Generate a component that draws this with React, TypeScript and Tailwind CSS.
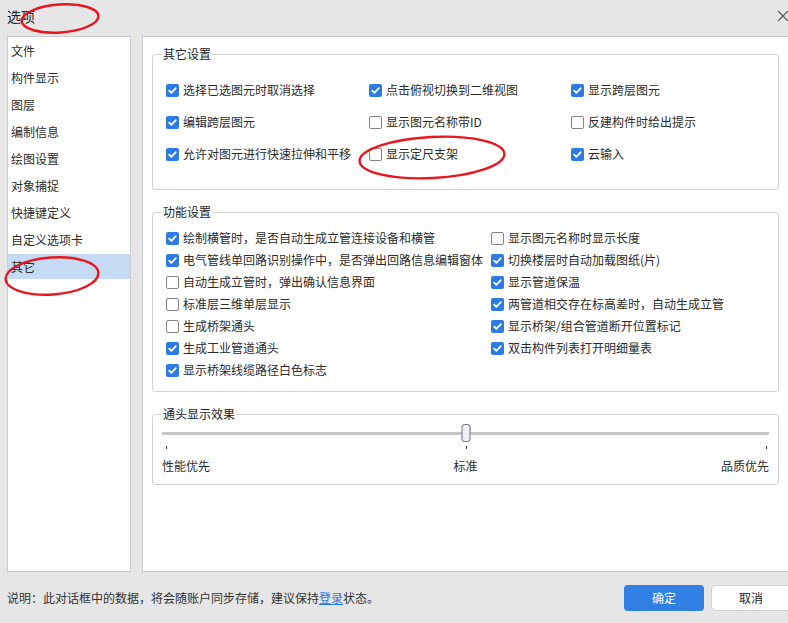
import React from 'react';

type Item = [string, boolean];

const otherSettings: Item[] = [
  ['选择已选图元时取消选择', true],
  ['点击俯视切换到二维视图', true],
  ['显示跨层图元', true],
  ['编辑跨层图元', true],
  ['显示图元名称带ID', false],
  ['反建构件时给出提示', false],
  ['允许对图元进行快速拉伸和平移', true],
  ['显示定尺支架', false],
  ['云输入', true],
];

const funcLeft: Item[] = [
  ['绘制横管时，是否自动生成立管连接设备和横管', true],
  ['电气管线单回路识别操作中，是否弹出回路信息编辑窗体', true],
  ['自动生成立管时，弹出确认信息界面', false],
  ['标准层三维单层显示', false],
  ['生成桥架通头', false],
  ['生成工业管道通头', true],
  ['显示桥架线缆路径白色标志', true],
];

const funcRight: Item[] = [
  ['显示图元名称时显示长度', false],
  ['切换楼层时自动加载图纸(片)', true],
  ['显示管道保温', true],
  ['两管道相交存在标高差时，自动生成立管', true],
  ['显示桥架/组合管道断开位置标记', true],
  ['双击构件列表打开明细量表', true],
];

const navItems = ['文件', '构件显示', '图层', '编制信息', '绘图设置', '对象捕捉', '快捷键定义', '自定义选项卡', '其它'];

const Check = ({ checked }: { checked: boolean }) =>
  checked ? (
    <span className="flex h-[13px] w-[13px] shrink-0 items-center justify-center rounded-[2px] bg-[#2b7be2]">
      <svg width="11" height="11" viewBox="0 0 11 11" fill="none">
        <path d="M2.2 5.6 L4.4 7.8 L8.8 3.1" stroke="white" strokeWidth="1.8" strokeLinecap="round" strokeLinejoin="round" />
      </svg>
    </span>
  ) : (
    <span className="h-[13px] w-[13px] shrink-0 rounded-[2px] border border-[#858585] bg-white" />
  );

const CheckRow = ({ label, checked, h }: { label: string; checked: boolean; h: string }) => (
  <div className={`flex items-center gap-[4px] whitespace-nowrap ${h}`}>
    <Check checked={checked} />
    <span>{label}</span>
  </div>
);

// groupbox: border + caption sitting on the top edge
const Group = ({ title, children, className }: { title: string; children: React.ReactNode; className?: string }) => (
  <fieldset className={`rounded-[3px] border border-[#d2d2d2] ${className ?? ''}`}>
    <legend className="ml-[9px] px-px leading-[16px] text-[#222]">{title}</legend>
    {children}
  </fieldset>
);

export default function App() {
  return (
    <div className="relative h-[623px] w-[788px] overflow-hidden bg-[#e6e6e6] font-['Noto_Sans_CJK_SC','Noto_Sans',sans-serif] text-[12px] text-[#2b2b2b]">
      <div className="w-[800px]">
        {/* title bar */}
        <div className="flex h-[32px] items-center justify-between pl-[7px] pr-[10px]">
          <span className="text-[14px] leading-[18px] text-[#1f1f1f]">选项</span>
          <svg width="12" height="12" viewBox="0 0 12 12" className="mr-[1px]">
            <path d="M1 1 L11 11 M11 1 L1 11" stroke="#555" strokeWidth="1.1" />
          </svg>
        </div>

        <div className="mt-[4px] flex h-[536px] gap-[11px] pl-[7px]">
          {/* sidebar */}
          <div className="w-[124px] border border-[#c9ccd1] bg-white">
            {navItems.map((n) => (
              <div key={n} className="flex h-[27px] items-center">
                <div className={`flex h-[25px] w-full items-center pl-[3px] ${n === '其它' ? 'bg-[#c4dbf3]' : ''}`}>{n}</div>
              </div>
            ))}
          </div>

          {/* content */}
          <div className="w-[651px] border border-[#c9ccd1] bg-white px-[9px] pt-[9px]">
            <div className="w-[627px]">
              <Group title="其它设置">
                <div className="grid grid-cols-[203px_202px_1fr] pb-[19px] pl-[13px] pt-[12px]">
                  {otherSettings.map(([l, c]) => (
                    <CheckRow key={l} label={l} checked={c} h="h-[32px]" />
                  ))}
                </div>
              </Group>

              <Group title="功能设置" className="mt-[14px]">
                <div className="flex pb-[10px] pl-[13px] pt-[7px]">
                  <div className="flex w-[325px] flex-col">
                    {funcLeft.map(([l, c]) => (
                      <CheckRow key={l} label={l} checked={c} h="h-[22px]" />
                    ))}
                  </div>
                  <div className="flex flex-col">
                    {funcRight.map(([l, c]) => (
                      <CheckRow key={l} label={l} checked={c} h="h-[22px]" />
                    ))}
                  </div>
                </div>
              </Group>

              <Group title="通头显示效果" className="mt-[14px]">
                <div className="px-[9px] pb-[10px] pt-[2px]">
                  <div className="relative h-[18px]">
                    <div className="absolute left-0 right-0 top-[8px] h-[3px] bg-[#c6c6c6]" />
                    <div className="absolute left-1/2 top-0 h-[18px] w-[9px] -translate-x-1/2 rounded-[3px] border-[1.5px] border-[#666b7c] bg-[#f0f0f2]" />
                  </div>
                  <div className="mt-[4px] flex justify-between pl-[4px] pr-[2px]">
                    <span className="h-[3px] w-px bg-[#333]" />
                    <span className="h-[3px] w-px bg-[#333]" />
                    <span className="h-[3px] w-px bg-[#333]" />
                  </div>
                  <div className="mt-[9px] flex justify-between leading-[16px]">
                    <span>性能优先</span>
                    <span>标准</span>
                    <span>品质优先</span>
                  </div>
                </div>
              </Group>
            </div>
          </div>
        </div>

        {/* footer */}
        <div className="flex h-[51px] items-center justify-between pl-[7px] pr-[9px]">
          <span className="text-[#333]">
            说明：此对话框中的数据，将会随账户同步存储，建议保持
            <span className="text-[#1e78e6] underline">登录</span>
            状态。
          </span>
          <div className="flex gap-[7px]">
            <button className="flex h-[26px] w-[80px] items-center justify-center rounded-[4px] bg-[#2f80e2] text-white">确定</button>
            <button className="flex h-[26px] w-[80px] items-center justify-center rounded-[4px] border border-[#cfcfcf] bg-white text-[#222]">取消</button>
          </div>
        </div>
      </div>

      {/* red annotation marks */}
      <svg className="pointer-events-none absolute left-0 top-0" width="788" height="623">
        <ellipse cx="60" cy="18.5" rx="38.5" ry="14" transform="rotate(-4 60 18.5)" fill="none" stroke="#e8161d" strokeWidth="2.4" />
        <ellipse cx="432" cy="157.5" rx="72.5" ry="20.5" transform="rotate(-3 432 157.5)" fill="none" stroke="#e8161d" strokeWidth="2.4" />
        <ellipse cx="52" cy="276" rx="46.5" ry="18.5" transform="rotate(-4 52 276)" fill="none" stroke="#e8161d" strokeWidth="2.4" />
      </svg>
    </div>
  );
}
